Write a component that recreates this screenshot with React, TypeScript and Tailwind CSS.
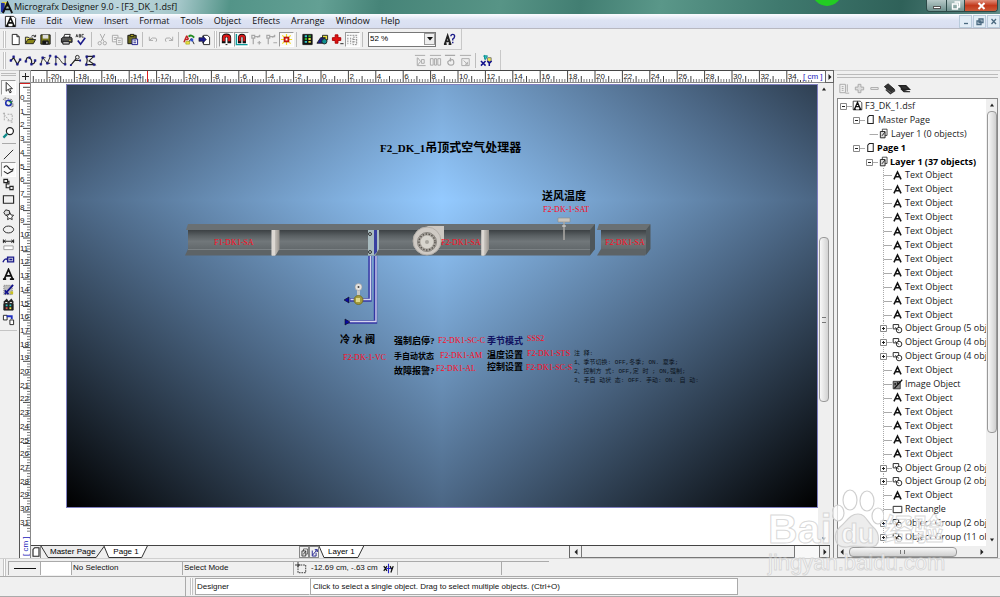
import React from "react";

type Kids = { children?: React.ReactNode };

function Glyph({ children, size = 14 }: Kids & { size?: number }) {
  return (
    <svg width={size} height={size} viewBox="0 0 14 14" fill="none" stroke="#222" strokeWidth="1" aria-hidden="true" className="shrink-0">
      {children}
    </svg>
  );
}

const GRAY = "#a8a8a8";
const NAVY = "#1b1b8a";

const icons: Record<string, React.ReactNode> = {
  new: <path d="M3.5 1.5h5l2.5 2.5v8.500h-7.500zM8.500 1.500v2.500h2.500" fill="#fff" />,
  open: (
    <>
      <path d="M1.500 11.500v-7h3l1 1h4v2" fill="#e8e070" />
      <path d="M1.500 11.500l2.500-4.500h8.500l-2.500 4.500z" fill="#8a8618" />
      <path d="M8 3.500q2-2 4 0M12.500 2v2h-2" />
    </>
  ),
  save: (
    <>
      <path d="M2 2h10v10h-10z" fill="#77771a" stroke="#111" />
      <path d="M4 2h6v4h-6z" fill="#ddd" stroke="none" />
      <path d="M4 8.500h6v3.500h-6z" fill="#111" />
      <path d="M8.500 9.500v2" stroke="#fff" />
    </>
  ),
  print: (
    <>
      <path d="M4 5l1-3.500h6l-1 3.500" fill="#fff" />
      <path d="M1.500 6l2-1.500h8.500l1 1.500v4h-11.500z" fill="#555" stroke="#111" />
      <path d="M3 9h7v3h-7z" fill="#bbb" stroke="#111" />
      <path d="M10 8h1.500" stroke="#e8e040" />
    </>
  ),
  spell: (
    <>
      <path d="M1 4.500l1-3 1 3M1.500 3.500h1M4.500 1.500v3h1.500v-3zM4.500 3h1.500M9.500 1.500h-2v3h2" stroke="#222" strokeWidth=".8" />
      <path d="M3 8l3 4 5-7" stroke={NAVY} strokeWidth="1.800" />
    </>
  ),
  cut: (
    <g stroke={GRAY}>
      <path d="M4.500 1l4 8M9.500 1l-4 8" />
      <circle cx="4" cy="11" r="1.800" />
      <circle cx="9.500" cy="11" r="1.800" />
    </g>
  ),
  copy: (
    <g stroke={GRAY} fill="#f4f4f4">
      <path d="M1.500 2.500h6v7h-6zM3 5h3M3 7h3" />
      <path d="M6 5.500h6v7h-6zM7.500 8h3M7.500 10h3" />
    </g>
  ),
  paste: (
    <>
      <path d="M2 2.500h9v9h-9z" fill="#6b6a20" stroke="#111" />
      <path d="M4.500 1.500h4v2h-4z" fill="#ddd02a" stroke="#111" />
      <path d="M6.500 6.500h6v6h-6z" fill="#fff" stroke={NAVY} />
      <path d="M8 8.500h3M8 10.500h3" stroke={NAVY} />
    </>
  ),
  undo: <path d="M2.500 4v4h4M2.500 8q3-4 7-2.500 2 2 0 4" stroke={GRAY} />,
  redo: <path d="M11.500 4v4h-4M11.500 8q-3-4-7-2.500-2 2 0 4" stroke={GRAY} />,
  palette: (
    <>
      <path d="M1 10l3-7M4 3l2 4M1.500 7h4" stroke="#c02020" strokeWidth="1.500" />
      <path d="M6 4q3-3 6 1" stroke="#208a20" strokeWidth="2" />
      <path d="M5 11l4-5M9 6l3 6" stroke="#222" />
      <path d="M3 9h4v3h-4z" fill="#e8e040" stroke="#999910" strokeWidth=".6" />
      <path d="M8 6h3v3h-3z" fill="#3050d0" stroke="none" />
    </>
  ),
  exportDoc: (
    <>
      <path d="M6 2.500h4l2.500 2v8h-6.500z" fill="#fff" />
      <path d="M1 5h4v-2l4 4-4 4v-2h-4z" fill={NAVY} stroke="#111" strokeWidth=".6" />
    </>
  ),
  magnet: (
    <>
      <path d="M4 11v-6q0-2.500 3-2.500t3 2.500v6" stroke="#111" strokeWidth="4" />
      <path d="M4 9v-4q0-2 3-2t3 2v4" stroke="#d81818" strokeWidth="2.600" />
      <path d="M6 12.500h2" stroke="#111" />
    </>
  ),
  magnetGrid: (
    <>
      <path d="M1.500 1v11.500h12" stroke="#0a9a9a" strokeWidth="1.500" />
      <path d="M5 11v-6q0-2.500 2.500-2.500t2.500 2.500v6" stroke="#111" strokeWidth="3.600" />
      <path d="M5 9v-4q0-2 2.500-2t2.500 2v4" stroke="#d81818" strokeWidth="2.200" />
    </>
  ),
  nodeAdd: <path d="M2 2.500h3v3h-3zM5 4h6M3.500 6v6M8 5l3-3M8 10.500h4M10 8.500v4" stroke={GRAY} strokeWidth="1.300" />,
  nodeDel: <path d="M2 2.500h3v3h-3zM5 4h6M3.500 6v6M8 5l3-3M9 10.500h4" stroke={GRAY} strokeWidth="1.300" />,
  sun: (
    <>
      <path d="M7 1v12M1 7h12M2.500 2.500l9 9M11.500 2.500l-9 9" stroke="#f2d820" strokeWidth="1.300" />
      <path d="M4.500 4.500h5v5h-5z" fill="#e01818" stroke="#a00" />
      <path d="M6 6h2v2h-2z" fill="#fff" stroke="none" />
    </>
  ),
  film: (
    <>
      <path d="M2 1.500h10v11h-10z" fill="#111" />
      <path d="M4 3.500h2.500M4 9.500h2.500" stroke="#30c8c8" strokeWidth="2" />
      <path d="M8 3.500h2.500M4 6.500h2.500" stroke="#30b030" strokeWidth="2" />
      <path d="M8 6.500h2.500M8 9.500h2.500" stroke="#e8e040" strokeWidth="2" />
    </>
  ),
  shapes: (
    <>
      <path d="M7 2.500h5.500v5h-5.500z" fill="#e8e040" />
      <path d="M1 11l4-6h5l-3 6z" fill={NAVY} />
      <circle cx="9" cy="9" r="2.800" fill="#109090" />
    </>
  ),
  cross: (
    <>
      <path d="M4.500 2h3v3h3v3h-3v3h-3v-3h-3v-3h3z" fill="#e01010" stroke="#a00" />
      <path d="M10 11.500h3.500" />
    </>
  ),
  columns: <path d="M1 2.500h12M2 5v7M5 5v7M7.500 4.500h4v8h-4zM7.500 7h4M7.500 9.500h4" stroke="#888" strokeDasharray="2 1" />,
  help: (
    <>
      <path d="M2 12l3-9 3 9M3 9h4M1 12h3M6 12h3" strokeWidth="2" />
      <path d="M8.500 3.500q0-2 2-2t2 2-2 3v1.500M10.500 9.500v1.500" stroke={NAVY} strokeWidth="1.500" />
    </>
  ),
  curveA: (
    <>
      <path d="M2 7l3-3 4 7 3-5" strokeWidth="1.300" />
      <path d="M1 6h2v2h-2zM4 2h2v2h-2zM8 10h2v2h-2zM11 5h2v2h-2z" fill={NAVY} stroke={NAVY} strokeWidth=".5" />
    </>
  ),
  curveB: (
    <>
      <path d="M2 8q1-6 4-4t2 6q3 2 4-3" strokeWidth="1.300" />
      <path d="M1 7h2v2h-2zM5 3h2v2h-2zM7 10h2v2h-2zM11 6h2v2h-2z" fill={NAVY} stroke={NAVY} strokeWidth=".5" />
    </>
  ),
  curveC: (
    <>
      <path d="M2 11l2-7 5 6 3-7M3 4h4M8 10h4" />
      <path d="M1 10h2v2h-2zM3 3h2v2h-2zM8 9h2v2h-2zM11 1h2v2h-2z" fill={NAVY} stroke={NAVY} strokeWidth=".5" />
    </>
  ),
  curveD: (
    <>
      <path d="M2 11v-8q3 0 5 4t5 4v-8" />
      <path d="M1 10h2v2h-2zM1 2h2v2h-2zM11 2h2v2h-2zM11 10h2v2h-2z" fill={NAVY} stroke={NAVY} strokeWidth=".5" />
    </>
  ),
  curveE: (
    <>
      <path d="M2 12l4-5h6M6 7l3-4" strokeWidth="1.300" />
      <circle cx="9" cy="3.500" r="2" fill="#eee" />
      <path d="M1 11h2v2h-2zM11 6h2v2h-2z" fill={NAVY} stroke="none" />
    </>
  ),
  curveF: (
    <>
      <path d="M2.500 2.500h8l-5 5 6 4h-9l1-5z" strokeWidth="1.200" />
      <path d="M1.500 10.500h2v2h-2zM10 10.500h2v2h-2zM9.500 1.500h2v2h-2zM2 2h2v2h-2z" fill={NAVY} stroke={NAVY} strokeWidth=".5" />
    </>
  ),
  tA: <path d="M1 1.500h11M3.500 4v8.500h9M4 4l3 4-3 4M8 6h3v4h-3z" stroke={GRAY} />,
  tB: <path d="M1 1.500h12M1.500 5v7h3v-7zM6 5v7h2v-7zM9.500 5v7h3v-7z" stroke={GRAY} />,
  tC: <path d="M1 1.500h11M7 4v4M4 8.500l3-2.500M4 8q0 4 3.500 4t3-3.500-3-2" stroke={GRAY} strokeWidth="1.300" />,
  tD: <path d="M1 1.500h12M3 5h8v7.500h-8zM5 7l4 4M9 8.500v2.500h-2.500" stroke={GRAY} />,
  xy: (
    <>
      <path d="M6 6l-2-4h4zM5 1v5" fill="#30d0d0" stroke="#109090" />
      <path d="M8 4h4v4h-4z" fill="#f0e850" stroke="#777" />
      <path d="M1 7.500l5 5M6 7.500l-5 5M8 7.500l2 2.500 2.500-2.500M10 10v3" stroke="#11118c" strokeWidth="1.600" />
    </>
  ),
  pointer: <path d="M4.500 1.500v9.500l2.300-2.200 1.700 4 1.500-.800-1.800-3.700h3z" fill="#fff" />,
  rotate: (
    <>
      <path d="M3 2l8 2 1 7-8-2zM1 4l3-2M10 12l3-2" stroke="#777" strokeDasharray="2 1" />
      <circle cx="7" cy="7.500" r="3" stroke="#2030b0" strokeWidth="1.700" />
      <path d="M7 6h3v2" fill="#20a040" stroke="#208040" />
    </>
  ),
  reshape: <path d="M2.500 2v9M2.500 4l6 7M6 3.500h5v7h-5M1 2.500h3M9.500 12h3" stroke={GRAY} strokeDasharray="2 1" />,
  zoom: (
    <>
      <circle cx="8.500" cy="5.500" r="3.800" fill="#fff" strokeWidth="1.300" />
      <path d="M5.500 8.500l-4 4" stroke="#108a8a" strokeWidth="2.400" />
    </>
  ),
  line: <path d="M2 12l10-10" />,
  wave: <path d="M2 5q2.500-4 5 0t5.500 1M2 9l4 2.500 6-3.500" strokeWidth="1.200" />,
  connect: <path d="M2 1.500h4v3.500h-4zM8.500 9h3.500v3.500h-3.500zM6 3.500h1.500v3h-3v4h4" strokeWidth="1.200" />,
  rect: <path d="M1.500 3h11v8h-11z" strokeWidth="1.200" />,
  star: (
    <>
      <path d="M2 5l2-3 4 1v4l-4 1z" fill="#ddd" />
      <path d="M8.500 5l1.200 2.500 2.800.3-2 2 .5 2.700-2.500-1.300-2.500 1.300.5-2.700-2-2 2.800-.3z" fill="#fff" />
    </>
  ),
  ellipse: <ellipse cx="7" cy="7" rx="5.500" ry="3.700" />,
  dimension: (
    <>
      <path d="M1 3.500h12M1.500 1.500v4M12.500 1.500v4M4 2l-2 1.500 2 1.500M10 2l2 1.500-2 1.500" />
      <path d="M2 8.500h10v4h-10z" stroke="#999" fill="#fff" />
    </>
  ),
  callout: (
    <>
      <path d="M6 4.500h6.500v5h-6.500z" stroke={NAVY} fill="#ccd" strokeWidth="1.400" />
      <path d="M1 10q2-5 5-3v-2M8 7h3" stroke={NAVY} strokeWidth="1.500" />
    </>
  ),
  text: <path d="M2.500 12l4.500-10.500 4.500 10.500M4.500 8.500h5M1 12h3.500M8.500 12h4.500" strokeWidth="1.800" stroke="#111" />,
  chart: (
    <>
      <path d="M2 2.500h9v10h-9z" fill="#bbb" stroke="#777" strokeDasharray="1 1" />
      <path d="M3 12l9-10M3 8l4 4" stroke="#11118c" strokeWidth="1.800" />
      <path d="M9 9h3v3h-3z" fill="#c8c020" stroke="none" />
    </>
  ),
  gallery: (
    <>
      <path d="M2 6h10v7h-10z" fill="#222" />
      <path d="M2 5l3-3 2 3 3-3 2 3" strokeWidth="2" />
      <path d="M4 8h2M8 8h2" stroke="#30c0c0" strokeWidth="2" />
      <path d="M4 11h2" stroke="#e05050" strokeWidth="2" />
      <path d="M8 11h2" stroke="#e8e040" strokeWidth="2" />
    </>
  ),
  link: (
    <>
      <path d="M1.500 2.500h4v5h-4zM8.500 7.500h4v5h-4z" fill="#fff" />
      <path d="M5 3.500h5.500v3" stroke="#2030c0" strokeWidth="2" />
    </>
  ),
  pOptions: <path d="M2 2.500h6v9h-6zM4 5h2M4 7h2M4 9h2M10 2.500v8M8 12h4" stroke={GRAY} />,
  pPlus: <path d="M5.500 2.500h3v3h3v3h-3v3h-3v-3h-3v-3h3z" stroke={GRAY} fill="#ddd" />,
  pMinus: <path d="M3 6h8v2h-8z" stroke={GRAY} />,
  pStack: (
    <>
      <path d="M1.500 5l4-3 7 6-4 3z" fill="#333" />
      <path d="M3 8l5 4.500 5-3.500" stroke="#333" strokeWidth="1.600" />
    </>
  ),
  pFlat: <path d="M1.500 4h7l4 4h-7zM3 7l3.500 3.500h6.500" fill="#333" strokeWidth="1.300" />,
  doc: (
    <>
      <path d="M1.500 1.500h9l2 2v9h-11z" fill="#fff" />
      <path d="M3 12l4-9 4 9M4.500 8.500h5M2 12h3M9 12h3" strokeWidth="1.700" stroke="#111" />
    </>
  ),
  page: <path d="M5.500 2h5v10h-7v-8z" fill="#fff" strokeWidth="1.300" />,
  layer: (
    <>
      <path d="M5.500 1.500h6v8h-6z" fill="#fff" />
      <path d="M3 4.500h6v8h-6zM5 10l4-5" fill="#ddd" strokeWidth="1.200" />
    </>
  ),
  layerPen: <path d="M3.500 4v8.500h6v-5M4 11l6-7M8 2.500h3.500v3.500z" stroke={NAVY} strokeWidth="1.400" />,
  tText: <path d="M2.500 12l4.500-9.500 4.500 9.500M4.500 8.500h5" stroke="#111" strokeWidth="2" />,
  group: (
    <>
      <path d="M1.500 2h7v5.500h-7z" strokeWidth="1.200" />
      <circle cx="9" cy="9" r="3.500" fill="#fff" strokeWidth="1.200" />
      <path d="M4 5.500l5 4" />
    </>
  ),
  image: (
    <>
      <path d="M1.500 3h9v9.500h-9z" fill="#888" />
      <path d="M3 12l10-11M4 5v3M7 4v2" stroke="#111" strokeWidth="1.600" />
    </>
  ),
};

function Tool({ name, label, on = false }: { name: string; label: string; on?: boolean }) {
  return (
    <button
      type="button"
      aria-label={label}
      className={
        on
          ? "flex h-[15px] w-[15px] shrink-0 items-center justify-center border border-t-[#999] border-l-[#999] border-r-white border-b-white bg-[#fafafa]"
          : "flex h-[15px] w-[15px] shrink-0 items-center justify-center"
      }
    >
      <Glyph size={13}>{icons[name]}</Glyph>
    </button>
  );
}

const Sep = () => <span className="mr-[3px] ml-[2px] h-[15px] w-px shrink-0 bg-[#bdbdbd]" />;
const Grip = () => <span className="mx-[2px] h-[17px] w-[3px] shrink-0 border-x border-[#c4c4c4] bg-white" />;

function TitleBar() {
  return (
    <header className="relative flex h-[14px] shrink-0 items-center overflow-hidden bg-[linear-gradient(100deg,#a5c6d2_0%,#bcd6dc_13%,#a3c6c8_18%,#539488_23%,#63a094_32%,#468478_38%,#579486_50%,#427e72_58%,#5a9789_66%,#3f796e_78%,#2f6159_90%,#5f8a86_100%)]">
      <span className="ml-px">
        <Glyph size={13}>
          <path d="M1 1h6v6h-6z" fill="#e6d83a" stroke="none" />
          <path d="M0 2h4v10h-4z" fill="#2030a0" stroke="none" />
          <path d="M2 13l5-11 5 11M4 9h6M7 2v4" strokeWidth="2" stroke="#111" />
        </Glyph>
      </span>
      <h1 className="flex-1 text-[9px] whitespace-nowrap text-[#111]">Micrografx Designer 9.0 - [F3_DK_1.dsf]</h1>
      <span className="absolute -top-[24px] right-[158px] size-[30px] rounded-full bg-[#22cc22]" />
      <div className="mr-[2px] flex h-[12px] self-start overflow-hidden rounded-b border border-t-0 border-[#2d4a48]">
        <button type="button" aria-label="Minimize" className="flex w-[20px] items-end justify-center border-r border-[#2d4a48] bg-[linear-gradient(#b7c9c8,#6f918e)] pb-[2px]">
          <span className="h-[3px] w-[8px] border border-[#555] bg-white" />
        </button>
        <button type="button" aria-label="Restore" className="flex w-[18px] items-center justify-center border-r border-[#2d4a48] bg-[linear-gradient(#b7c9c8,#6f918e)]">
          <svg width="10" height="9" viewBox="0 0 10 9" fill="none" stroke="#fff" strokeWidth="1.400"><path d="M3.500 1h5v5h-2M1.500 3h5v5h-5z" /></svg>
        </button>
        <button type="button" aria-label="Close" className="flex w-[32px] items-center justify-center bg-[linear-gradient(#e0907c,#c23a1c_50%,#cc5a38)]">
          <svg width="9" height="8" viewBox="0 0 9 8" stroke="#fff" strokeWidth="2"><path d="M1.500 1l6 6M7.500 1l-6 6" /></svg>
        </button>
      </div>
    </header>
  );
}

const menus = ["File", "Edit", "View", "Insert", "Format", "Tools", "Object", "Effects", "Arrange", "Window", "Help"];

function MenuBar() {
  return (
    <nav className="flex h-[15px] shrink-0 items-center border-b border-[#b8b8c0] bg-[linear-gradient(#fbfcff,#dde3f3_45%,#d8def0)] pl-[4px]">
      <Glyph size={13}>{icons.doc}</Glyph>
      <ul className="ml-[4px] flex flex-1 gap-[11px] text-[9px] text-[#111]">
        {menus.map((m) => (
          <li key={m}><button type="button">{m}</button></li>
        ))}
      </ul>
      <div className="flex gap-px text-[#4b6a80]">
        {["M3 6.500h4", "M4 2h4v3.500h-4zM2 4h4v3.500h-4z", "M2.500 2l4.500 5M7 2l-4.500 5"].map((d, i) => (
          <button key={d} type="button" aria-label={["Minimize document", "Restore document", "Close document"][i]} className="flex h-[13px] w-[13px] items-center justify-center border border-[#b9cbdb] bg-[#e2edf6]">
            <svg width="10" height="9" viewBox="0 0 10 9" fill="none" stroke="currentColor" strokeWidth="1.300"><path d={d} /></svg>
          </button>
        ))}
      </div>
    </nav>
  );
}

function Toolbars() {
  return (
    <div className="shrink-0 bg-[#f0f0f0]">
      <div className="flex h-[21px] w-[462px] items-center border-r border-b border-[#c8c8c8] pl-px">
        <Grip />
        <Tool name="new" label="New" /><Tool name="open" label="Open" /><Tool name="save" label="Save" />
        <Sep />
        <Tool name="print" label="Print" /><Tool name="spell" label="Spelling" />
        <Sep />
        <Tool name="cut" label="Cut" /><Tool name="copy" label="Copy" /><Tool name="paste" label="Paste" />
        <Sep />
        <Tool name="undo" label="Undo" /><Tool name="redo" label="Redo" />
        <Sep />
        <Tool name="palette" label="Colors" /><Tool name="exportDoc" label="Export" />
        <Grip />
        <Tool name="magnet" label="Snap to object" on /><Tool name="magnetGrid" label="Snap to grid" on />
        <Tool name="nodeAdd" label="Add node" /><Tool name="nodeDel" label="Delete node" />
        <Tool name="sun" label="Highlight" on />
        <Sep />
        <Tool name="film" label="Gallery" /><Tool name="shapes" label="Shapes" /><Tool name="cross" label="Add" /><Tool name="columns" label="Columns" on />
        <Sep />
        <label className="relative ml-[2px] flex h-[15px] w-[68px] shrink-0 items-center border border-[#777] bg-white text-[8px]">
          <select aria-label="Zoom level" defaultValue="52 %" className="h-full w-full appearance-none bg-transparent pl-px font-[Liberation_Sans,sans-serif] text-[8px] leading-[12px] outline-none">
            <option>52 %</option>
            <option>100 %</option>
          </select>
          <span className="pointer-events-none absolute right-0 flex h-[12px] w-[11px] items-center justify-center border border-[#999] bg-[#eee]">
            <svg width="6" height="4" viewBox="0 0 6 4"><path d="M0 0h6l-3 3.500z" fill="#111" /></svg>
          </span>
        </label>
        <span className="w-[6px] shrink-0" />
        <Tool name="help" label="Help" />
      </div>
      <div className="flex h-[20px] w-[501px] items-center border-r border-[#c8c8c8] pl-px">
        <Grip />
        <Tool name="curveA" label="Polyline" /><Tool name="curveB" label="Curve" /><Tool name="curveC" label="Bezier" />
        <Tool name="curveD" label="Spline" /><Tool name="curveE" label="Node" /><Tool name="curveF" label="Polygon" />
        <span className="flex-1" />
        <Tool name="tA" label="Align" /><Tool name="tB" label="Space" /><Tool name="tC" label="Rotate" /><Tool name="tD" label="Scale" />
        <Sep />
        <Tool name="xy" label="Coordinates" />
        <span className="w-[6px]" />
      </div>
    </div>
  );
}

const palette: [string, string][] = [
  ["pointer", "Select"], ["rotate", "Rotate"], ["reshape", "Reshape"], ["zoom", "Zoom"],
  ["line", "Line"], ["wave", "Curves"], ["connect", "Connector"], ["rect", "Rectangle"], ["star", "Polygon"],
  ["ellipse", "Ellipse"], ["dimension", "Dimension"], ["callout", "Callout"], ["text", "Text"],
  ["chart", "Chart"], ["gallery", "Clip art"], ["link", "Link"],
];

function Palette() {
  return (
    <aside className="flex w-[19px] shrink-0 flex-col items-center border-t border-[#ccc] bg-[#f0f0f0] pt-[2px] pr-[2px]">
      <span className="mb-[4px] h-[3px] w-[15px] shrink-0 border-y border-[#bbb]" />
      {palette.map(([n, l], i) => (
        <React.Fragment key={n}>
          {i === 4 && <span className="my-[3px] h-px w-[14px] shrink-0 bg-[#aaa]" />}
          <Tool name={n} label={l} on={i === 0 || i === 5} />
        </React.Fragment>
      ))}
      <span className="mt-[3px] h-px w-full shrink-0 bg-[#c4c4c4]" />
    </aside>
  );
}

const UNIT = 13.7;

function TopRuler() {
  const origin = 290;
  const ticks = Array.from({ length: 285 }, (_, i) => i - 105);
  return (
    <svg className="h-[13px] w-full border-y border-t-[#444] border-b-[#888] bg-white" aria-hidden="true">
      {ticks.map((t) => {
        const h = t % 10 === 0 ? 11 : t % 5 === 0 ? 6 : 3;
        return <path key={t} d={`M${origin + (t * UNIT) / 5} 11v-${h}`} stroke="#444" strokeWidth={t % 5 === 0 ? 1 : 0.7} />;
      })}
      {Array.from({ length: 28 }, (_, i) => i * 2 - 20).map((n) => (
        <text key={n} x={origin + n * UNIT + 1} y="8" fontSize="8" fontFamily="Liberation Sans, sans-serif" fill="#222">{n}</text>
      ))}
      <path d="M116.500 0v12" stroke="#e02020" />
      <path d="M769 0h24v9h-24z" fill="#fff" />
      <text x="772" y="8" fontSize="8" fontFamily="Liberation Sans, sans-serif" fill="#2222bb">[ cm ]</text>
    </svg>
  );
}

function SideRuler() {
  const origin = 18;
  return (
    <svg className="w-[12px] shrink-0 self-stretch border-x border-l-[#555] border-r-[#888] bg-white" aria-hidden="true">
      {Array.from({ length: 165 }, (_, i) => i - 5).map((t) => (
        <path key={t} d={`M11 ${origin + (t * UNIT) / 5}h-${t % 5 === 0 ? 8 : 4}`} stroke="#444" strokeWidth={t % 5 === 0 ? 1 : 0.7} />
      ))}
      {Array.from({ length: 32 }, (_, i) => i).map((n) => (
        <text key={n} x="0" y={origin + n * UNIT - 1} fontSize="8" fontFamily="Liberation Sans, sans-serif" fill="#222">{n}</text>
      ))}
      <path d="M0 .5h12" stroke="#d02020" />
      <path d="M0 450h10v26h-10z" fill="#fff" />
      <text transform="translate(8 473) rotate(-90)" fontSize="8" fontFamily="Liberation Sans, sans-serif" fill="#2222bb">[ cm ]</text>
    </svg>
  );
}

function Ducts() {
  return (
    <svg className="absolute top-[130px] left-[118px]" width="470" height="115" viewBox="185 215 470 115" fill="none" aria-hidden="true">
      <defs>
        <linearGradient id="duct" x1="0" y1="0" x2="0" y2="1">
          <stop offset="0" stopColor="#3c4144" /><stop offset=".3" stopColor="#5a6063" /><stop offset=".6" stopColor="#71777a" /><stop offset="1" stopColor="#63696c" />
        </linearGradient>
        <linearGradient id="plate" x1="0" y1="0" x2="1" y2="0">
          <stop offset="0" stopColor="#e6e2dd" /><stop offset="1" stopColor="#97928c" />
        </linearGradient>
      </defs>
      <path d="M188 224H595V230H186z" fill="#6a7073" />
      <path d="M188 230H595V249H188z" fill="url(#duct)" />
      <path d="M188 249H595L590 255.500H185z" fill="#5d6366" />
      <path d="M188 249.500H590" stroke="#7b8184" />
      <path d="M595 224V249L590 255V230z" fill="#4e565a" />
      <path d="M599 224H650V230H597z" fill="#6a7073" />
      <path d="M601 230H650V249H601z" fill="url(#duct)" />
      <path d="M601 249H650L645 255.500H597L601 249z" fill="#5d6366" />
      <path d="M650.500 224V249L646 255V230z" fill="#50585c" />
      <path d="M271.500 230h8v19l-4 6.500h-4z" fill="url(#plate)" />
      <path d="M272 230h3v25.500h-3z" fill="#ddd8d3" />
      <path d="M481.500 230h7.500v19l-4 6.500h-3.500z" fill="url(#plate)" />
      <path d="M481.500 230h2.500v25.500h-2.500z" fill="#ddd8d3" />
      <path d="M368 230h11v19l-4 6.500h-7z" fill="#a9bcc0" />
      <path d="M374 230h3v22l-3 3z" fill="#3940a0" />
      <circle cx="370" cy="234" r="1.500" stroke="#333" />
      <circle cx="370" cy="252" r="1.500" stroke="#333" />
      <path d="M370 256v44h-20M375.500 256v66h-28" stroke="#3436a4" strokeWidth="3.400" />
      <path d="M370.500 256v43.500h-20M376 256v65.500h-28" stroke="#d4d4ee" strokeWidth="1.400" />
      <path d="M349 297v6l-5-3zM345 319v6l5-3z" fill="#0808a0" stroke="#111" strokeWidth=".6" />
      <path d="M358.500 290v8" stroke="#c8c8c4" strokeWidth="3" />
      <circle cx="358.500" cy="287" r="3.500" fill="#e4e2df" stroke="#999" strokeWidth=".6" />
      <circle cx="358.500" cy="287" r="1" fill="#444" />
      <circle cx="358.500" cy="300" r="4.500" fill="#a29a3c" stroke="#6e681e" strokeWidth=".8" />
      <path d="M356 298h4v4h-4z" fill="#ded88c" />
      <path d="M427 226h17v14l-5 4z" fill="#cdc8c2" />
      <circle cx="427" cy="241" r="14" fill="#cfcac4" stroke="#b4afa9" />
      <circle cx="427" cy="242" r="9.500" fill="#aba69f" stroke="#8a8680" />
      <circle cx="427" cy="242" r="8" stroke="#55514c" strokeWidth="1.400" strokeDasharray="1.500 1.500" />
      <circle cx="427" cy="242" r="6.500" fill="#d8d5ce" />
      <circle cx="427" cy="242" r="2" fill="#a8a59e" />
      <path d="M558 218h12v4h-12z" fill="#c9c4bd" stroke="#8f8a84" strokeWidth=".6" />
      <path d="M564 222v18" stroke="#a8a6a2" strokeWidth="1.600" />
      <path d="M562 226h4" stroke="#ddd" />
    </svg>
  );
}

function Drawing() {
  return (
    <div className="relative ml-[35px] h-[424px] flex-1 overflow-hidden border border-[#8080c0]">
      <div className="grid h-full grid-cols-2 grid-rows-[115px_1fr]">
        <div className="bg-[linear-gradient(to_top_left,#94caff,#4b6684_50%,#000)] bg-[length:100%_307px] bg-bottom" />
        <div className="bg-[linear-gradient(to_top_right,#94caff,#4b6684_50%,#000)] bg-[length:100%_307px] bg-bottom" />
        <div className="bg-[linear-gradient(to_bottom_left,#94caff,#4b6684_50%,#000)]" />
        <div className="bg-[linear-gradient(to_bottom_right,#94caff,#4b6684_50%,#000)]" />
      </div>
      <Ducts />
      <div className="font-['Liberation_Serif','Noto_Sans_CJK_SC',serif] leading-none whitespace-pre text-black">
        <h2 className="absolute top-[57px] left-[313px] text-[12px] font-bold"><span className="text-[11px]">F2_DK_1</span>吊顶式空气处理器</h2>
        <div className="font-bold">
          <span className="absolute top-[106px] left-[475px] text-[11px]">送风温度</span>
          <span className="absolute top-[250px] left-[273px] text-[10px]">冷 水 阀</span>
          <span className="absolute top-[252px] left-[327px] text-[9px]">强制启停?</span>
          <span className="absolute top-[268px] left-[327px] text-[8px]">手自动状态</span>
          <span className="absolute top-[282px] left-[327px] text-[9px]">故障报警?</span>
          <span className="absolute top-[252px] left-[420px] text-[9px] text-[#101060]">季节模式</span>
          <span className="absolute top-[266px] left-[420px] text-[9px]">温度设置</span>
          <span className="absolute top-[278px] left-[420px] text-[9px]">控制设置</span>
        </div>
        <div className="text-[8px] text-[#ff0a20]">
          <span className="absolute top-[121px] left-[476px]">F2-DK-1-SAT</span>
          <span className="absolute top-[154px] left-[147px]">F1-DK1-SA</span>
          <span className="absolute top-[154px] left-[374px]">F2-DK1-SA</span>
          <span className="absolute top-[154px] left-[538px]">F2-DK1-SA</span>
          <span className="absolute top-[269px] left-[276px]">F2-DK-1-VC</span>
          <span className="absolute top-[252px] left-[371px]">F2-DK1-SC-C</span>
          <span className="absolute top-[267px] left-[373px]">F2-DK1-AM</span>
          <span className="absolute top-[280px] left-[369px]">F2-DK1-AL</span>
          <span className="absolute top-[250px] left-[460px]">SSS2</span>
          <span className="absolute top-[265px] left-[460px]">F2-DK1-STS</span>
          <span className="absolute top-[279px] left-[459px]">F2-DK1-SC-S</span>
        </div>
        <p className="absolute top-[264px] left-[507px] font-['Liberation_Mono','Noto_Sans_CJK_SC',monospace] text-[6px] leading-[9px] text-[#0c1420]">
          {"注 释:\n1、季节切换: OFF,冬季; ON. 夏季;\n2、控制方 式: OFF,定 时 ; ON,强制;\n3、手自 动状 态: OFF. 手动: ON. 自 动:"}
        </p>
      </div>
    </div>
  );
}

function Arrow({ d }: { d: string }) {
  return <svg width="6" height="6" viewBox="0 0 6 6" className="shrink-0"><path d={d} fill="#222" /></svg>;
}
const UP = "M1 4.500h4l-2-3z";
const DOWN = "M1 1.500h4l-2 3z";
const LEFT = "M4.500 0v6l-3-3z";
const RIGHT = "M1.500 0v6l3-3z";

function Tab({ children, on = false }: Kids & { on?: boolean }) {
  return (
    <button type="button" className="relative h-[12px] px-[9px] text-[8px] leading-[12px] whitespace-nowrap">
      <svg className="absolute inset-0 h-full w-full" viewBox="0 0 100 12" preserveAspectRatio="none" aria-hidden="true">
        <path d="M0 0l11 11.500h76l13-11.500" fill={on ? "#fff" : "#ececec"} stroke="#333" vectorEffect="non-scaling-stroke" />
      </svg>
      <span className="relative">{children}</span>
    </button>
  );
}

function Workspace() {
  return (
    <main className="flex min-w-0 flex-1 flex-col">
      <div className="flex h-[13px] shrink-0">
        <div className="flex w-[12px] shrink-0 items-center justify-center border border-[#999] bg-[#f0f0f0]">
          <svg width="9" height="9" viewBox="0 0 9 9" stroke="#222" strokeWidth="1"><path d="M4.500 1v7M1 4.500h7" /></svg>
        </div>
        <div className="min-w-0 flex-1 overflow-hidden"><TopRuler /></div>
        <button type="button" aria-label="Toggle panel" className="flex w-[9px] items-center justify-center border border-[#666] bg-[#f4f4f4]"><Arrow d={RIGHT} /></button>
      </div>
      <div className="flex min-h-0 flex-1">
        <SideRuler />
        <div className="flex min-w-0 flex-1 flex-col">
          <div className="flex min-h-0 flex-1">
            <div className="flex min-w-0 flex-1 items-start bg-white pt-px"><Drawing /></div>
            <div className="flex w-[12px] shrink-0 flex-col items-center bg-[#efefef] py-[3px]">
              <Arrow d={UP} />
              <span className="flex-[145]" />
              <span className="flex w-[10px] flex-[163] items-center justify-center rounded-sm border border-[#999] bg-[linear-gradient(90deg,#f8f8f8,#d2d2d2)]">
                <span className="h-[6px] w-[4px] border-y border-[#777]" />
              </span>
              <span className="flex-[134]" />
              <Arrow d={DOWN} />
            </div>
          </div>
          <div className="flex h-[13px] shrink-0 border-t border-[#444] bg-[#f0f0f0] font-[Liberation_Sans,sans-serif]">
            <div className="flex flex-[268] items-center">
              <span className="flex h-full w-[10px] items-center justify-center border-r border-[#888]"><Glyph size={12}>{icons.page}</Glyph></span>
              <Tab>Master Page</Tab>
              <Tab on>Page 1</Tab>
            </div>
            <div className="flex flex-[270] items-center">
              <span className="flex h-full w-[10px] items-center border border-[#888]"><Glyph size={9}>{icons.layer}</Glyph></span>
              <span className="flex h-full w-[10px] items-center border border-[#888]"><Glyph size={9}>{icons.layerPen}</Glyph></span>
              <Tab on>Layer 1</Tab>
            </div>
            <div className="flex flex-[260] border-l border-[#666]">
              <button type="button" aria-label="Scroll left" className="flex w-[12px] items-center justify-center border-r border-b border-[#777]"><Arrow d={LEFT} /></button>
              <span className="flex-[213] border-r border-b border-[#777]" />
              <span className="flex-[24] bg-[#f8f8f8]" />
              <button type="button" aria-label="Scroll right" className="flex w-[11px] items-center justify-center border border-t-0 border-[#777]"><Arrow d={RIGHT} /></button>
            </div>
          </div>
        </div>
        <span className="w-[4px] shrink-0 border-r border-[#888] bg-[#f0f0f0]" />
      </div>
    </main>
  );
}

type Row = { icon: string; text: string; level: number; box?: "+" | "-"; bold?: boolean };
const T: Row = { icon: "tText", text: "Text Object", level: 3 };
const G = (n: number): Row => ({ icon: "group", text: `Object Group (${n} objects)`, level: 3, box: "+" });
const rows: Row[] = [
  { icon: "doc", text: "F3_DK_1.dsf", level: 0, box: "-" },
  { icon: "page", text: "Master Page", level: 1, box: "-" },
  { icon: "layer", text: "Layer 1 (0 objects)", level: 2 },
  { icon: "page", text: "Page 1", level: 1, box: "-", bold: true },
  { icon: "layer", text: "Layer 1 (37 objects)", level: 2, box: "-", bold: true },
  T, T, T, T, T, T, T, T, T, T, T,
  G(5), G(4), G(4), T,
  { icon: "image", text: "Image Object", level: 3 },
  T, T, T, T, T, G(2), G(2), T,
  { icon: "rect", text: "Rectangle", level: 3 },
  G(2), G(11),
];
const indents = ["pl-0", "pl-[13px]", "pl-[26px]", "pl-[40px]"];

function TreeRow({ row }: { row: Row }) {
  return (
    <li className={`flex min-h-0 flex-1 items-center ${indents[row.level]}`}>
      <svg width="12" height="14" viewBox="0 0 12 14" className="shrink-0" fill="none" stroke="#aaa" aria-hidden="true">
        {row.level === 3 && <path d="M3.500 0v14" strokeDasharray="1 1" />}
        <path d="M3.500 7.500h8.500" />
        {row.box && <path d="M.5 4.500h6v6h-6z" fill="#fff" stroke="#888" />}
        {row.box && <path d={row.box === "+" ? "M2 7.500h3M3.500 6v3" : "M2 7.500h3"} stroke="#222" />}
      </svg>
      <Glyph size={11}>{icons[row.icon]}</Glyph>
      <span className={row.bold ? "ml-px font-bold whitespace-nowrap text-black" : "ml-[2px] whitespace-nowrap"}>{row.text}</span>
    </li>
  );
}

function ObjectPanel() {
  return (
    <aside className="flex w-[166px] shrink-0 flex-col border-t border-[#ccc] bg-[#f0f0f0] pt-[3px] pr-[2px] pl-[3px]">
      <span className="h-[4px] shrink-0 border-y border-[#bbb]" />
      <div className="flex h-[20px] shrink-0 items-center">
        <Tool name="pOptions" label="Options" /><Tool name="pPlus" label="Expand" /><Tool name="pMinus" label="Collapse" />
        <Tool name="pStack" label="Stack layers" /><Tool name="pFlat" label="Flatten" />
      </div>
      <div className="flex min-h-0 flex-1 border border-[#888] bg-white">
        <div className="flex min-w-0 flex-1 flex-col">
          <ul className="flex min-h-0 flex-1 flex-col overflow-hidden pb-[2px] pl-[2px] text-[9px] leading-[12px] text-[#1a1a1a]">
            {rows.map((r, i) => <TreeRow key={i} row={r} />)}
          </ul>
          <div className="flex h-[11px] shrink-0 items-center bg-[#efefef] px-px">
            <Arrow d={LEFT} />
            <span className="ml-[4px] flex h-[10px] flex-[104] items-center justify-center rounded-sm border border-[#999] bg-[linear-gradient(#f6f6f6,#d0d0d0)]">
              <span className="h-[4px] w-[5px] border-x border-[#777]" />
            </span>
            <span className="flex-[22]" />
            <Arrow d={RIGHT} />
          </div>
        </div>
        <div className="flex w-[11px] shrink-0 flex-col items-center bg-[#efefef] pt-[3px] pb-[14px]">
          <Arrow d={UP} />
          <span className="mt-[3px] w-[10px] flex-[320] rounded-sm border border-[#999] bg-[linear-gradient(90deg,#f8f8f8,#cfcfcf)]" />
          <span className="flex-[104]" />
          <Arrow d={DOWN} />
        </div>
      </div>
    </aside>
  );
}

function StatusBars() {
  return (
    <footer className="shrink-0 bg-[#f0f0f0] font-[Liberation_Sans,sans-serif] text-[8px] text-[#111]">
      <div className="flex h-[19px] items-center border-y border-[#d0d0d0] border-b-[#aaa] pl-px [&>div]:flex [&>div]:h-[14px] [&>div]:items-center [&>div]:border-t [&>div]:border-l [&>div]:border-[#aaa]">
        <Grip />
        <div className="w-[32px] justify-center"><span className="h-px w-[22px] bg-[#111]" /></div>
        <div className="w-[31px] bg-white" />
        <div className="w-[111px] pl-px">No Selection</div>
        <div className="w-[111px] pl-px">Select Mode</div>
        <div className="w-[104px] gap-[4px] pl-px">
          <Glyph size={12}><path d="M3.500 3.500h9v9h-9z" strokeDasharray="2 1" /><path d="M3.500 0v6M0 3.500h6" /></Glyph>
          <span className="flex-1">-12.69 cm, -.63 cm</span>
          <span className="mr-[3px]"><Glyph size={11}><path d="M1 4l4 6M5 4l-4 6M9 4l2 4M13 4l-3 8" stroke="#111" strokeWidth="1.600" /><path d="M7 1v12M4 7h6" stroke="#2222cc" strokeWidth="1.400" /></Glyph></span>
        </div>
        <div className="w-[104px]" />
        <div className="w-[48px]" />
      </div>
      <div className="flex h-[20px] items-center border-b border-[#aaa]">
        <span className="h-full w-[186px] border-r border-[#aaa]" />
        <span className="w-[2px]" />
        <Grip />
        <div className="flex h-[17px] w-[115px] items-center border border-[#aaa] border-r-white bg-white pl-px">Designer</div>
        <div className="flex h-[17px] w-[428px] items-center border border-[#aaa] bg-white pl-[2px]">Click to select a single object. Drag to select multiple objects. (Ctrl+O)</div>
      </div>
    </footer>
  );
}

function Watermark() {
  return (
    <div aria-hidden="true" className="pointer-events-none absolute right-[50px] bottom-[20px] flex w-[182px] flex-col font-['Liberation_Sans','Noto_Sans_CJK_SC',sans-serif] text-white/75 [-webkit-text-stroke:1px_#d0d0d0cc]">
      <div className="flex h-[62px] items-end">
        <span className="text-[41px] leading-[40px] font-bold">Bai</span>
        <span className="relative flex h-[60px] w-[52px] shrink-0 items-end justify-center">
          <svg className="absolute inset-0" width="52" height="60" viewBox="0 0 52 60" fill="#ffffffbb" stroke="#d0d0d0" strokeWidth="1.200">
            <ellipse cx="18" cy="11" rx="7" ry="10" />
            <ellipse cx="35" cy="12" rx="7" ry="10" />
            <ellipse cx="6" cy="24" rx="6" ry="8" />
            <ellipse cx="46" cy="27" rx="6" ry="8" />
            <path d="M26 25c8 0 9 8 15 13s10 20-4 20c-6 0-16-2-22 0-14 1-14-14-7-20s10-13 18-13z" fill="#e6e6e6bb" />
          </svg>
          <span className="relative pb-px text-[27px] leading-[28px] font-bold">du</span>
        </span>
        <span className="text-[30px] leading-[38px] font-bold whitespace-nowrap">经验</span>
      </div>
      <span className="text-[22px] leading-[28px] whitespace-nowrap">jingyan.baidu.com</span>
    </div>
  );
}

export default function App() {
  return (
    <div className="relative flex h-screen min-h-[597px] w-full flex-col overflow-hidden bg-[#f0f0f0] font-['Open_Sans','Noto_Sans_CJK_SC',sans-serif]">
      <TitleBar />
      <MenuBar />
      <Toolbars />
      <div className="flex min-h-0 flex-1">
        <Palette />
        <Workspace />
        <ObjectPanel />
      </div>
      <StatusBars />
      <Watermark />
    </div>
  );
}
